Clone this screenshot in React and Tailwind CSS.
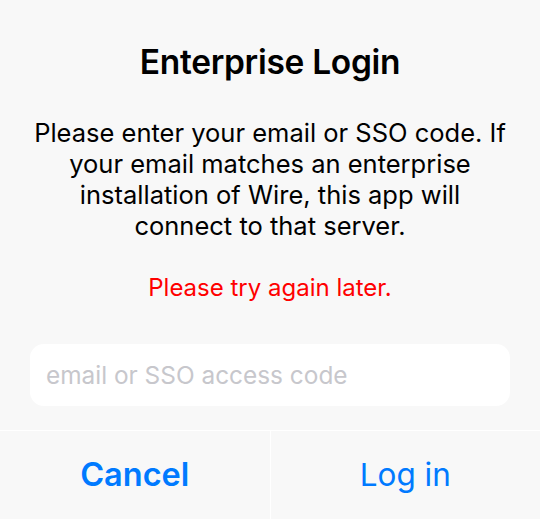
import React, { useState } from "react";

function App() {
  const [value, setValue] = useState("");

  return (
    <div
      className="w-[540px] h-[519px] bg-[#f8f8f8] flex flex-col text-black"
      style={{ fontFamily: "Inter, 'Noto Sans', sans-serif" }}
    >
      <div className="flex flex-col items-center px-[30px] pt-[45px]">
        <h1 className="text-[33.5px] leading-[34px] font-semibold tracking-[-0.3px]">
          Enterprise Login
        </h1>
        <p className="mt-[38px] w-[484px] text-[25.5px] leading-[31px] text-center">
          Please enter your email or SSO code. If your email matches an enterprise
          installation of Wire, this app will connect to that server.
        </p>
        <p className="mt-[31px] text-[24px] leading-[31px] text-[#ff0000]">
          Please try again later.
        </p>
        <input
          type="text"
          value={value}
          onChange={(e) => setValue(e.target.value)}
          placeholder="email or SSO access code"
          className="mt-[41px] w-full h-[62px] rounded-[14px] bg-white px-[16px] text-[24.4px] outline-none placeholder:text-[#c7c7cc]"
        />
      </div>

      <div className="mt-[24px] flex-1 flex border-t border-white">
        <button
          type="button"
          className="flex-1 border-r border-white text-[32.5px] font-semibold text-[#007aff]"
        >
          Cancel
        </button>
        <button type="button" className="flex-1 text-[31.5px] text-[#007aff]">
          Log in
        </button>
      </div>
    </div>
  );
}

export default App;
